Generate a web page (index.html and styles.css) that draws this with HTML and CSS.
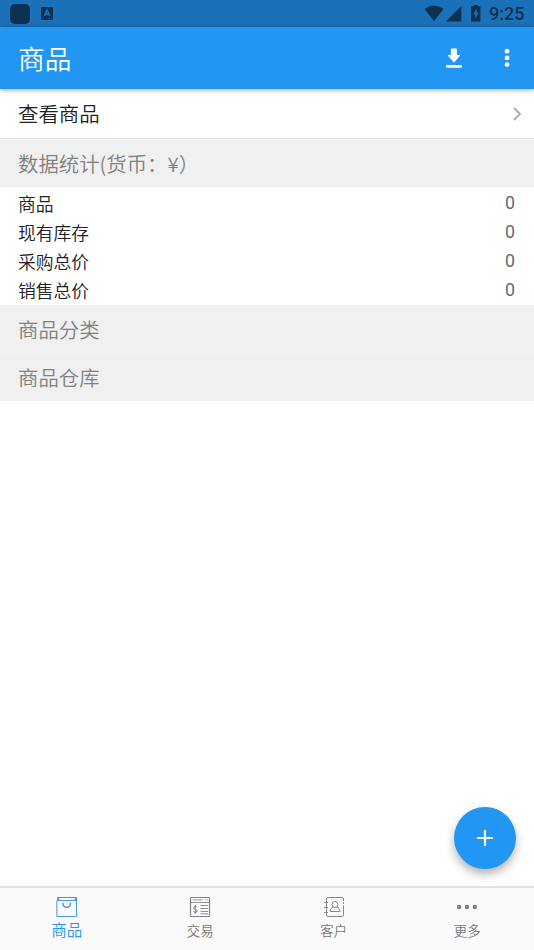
FILE: index.html
```html
<!DOCTYPE html>
<html lang="zh-CN">
<head>
<meta charset="utf-8">
<title>商品</title>
<link rel="stylesheet" href="styles.css">
</head>
<body>
<div class="app">
  <div class="status">
    <span class="square"></span>
    <svg class="badge" width="12" height="13" viewBox="0 0 12 13"><rect width="12" height="13" rx="1" fill="#0d3251"/><path d="M3.4 9 6 3.2 8.6 9M4.4 7.3h3.2" fill="none" stroke="#1b71b8" stroke-width="1.6"/><path d="M6.5 11.5h4" stroke="#1b71b8" stroke-width=".6" stroke-dasharray="1 .5"/></svg>
    <svg class="signals" width="58" height="18" viewBox="0 0 58 18" fill="#0d3251"><path d="M.5 4.1Q10 -2.9 19.5 4.1L10 16.2Z"/><path d="M37.3 1v15.5H21.8Z"/><path fill-rule="evenodd" d="M47 1.3h2.7V0h4v1.3h2.7v15.2H47ZM52.7 3.6 49.2 9.5h2v4.6l3.6-6.3h-2.1Z"/></svg>
    <span class="clock">9:25</span>
  </div>
  <header class="bar">
    <h1>商品</h1>
    <svg class="download" width="16" height="20" viewBox="0 0 16 20" fill="#fff"><path d="M4.9 1Q4.9 .5 5.4 .5h5q.5 0 .5.5v6h2.7q.9 0 .3.7L8.5 14q-.6.5-1.2 0L2 7.7q-.6-.7.3-.7h2.6Z"/><rect x="0" y="17" width="16" height="2.7" rx="1"/></svg>
    <svg class="dots" width="6" height="20" viewBox="0 0 6 20" fill="#fff"><circle cx="3" cy="3.2" r="2.4"/><circle cx="3" cy="9.9" r="2.4"/><circle cx="3" cy="16.6" r="2.4"/></svg>
  </header>
  <main>
    <div class="link"><span>查看商品</span><svg width="9" height="14" viewBox="0 0 9 14"><path d="m1 1 6 6-6 6" fill="none" stroke="#a5abb1" stroke-width="1.8"/></svg></div>
    <h2 class="section">数据统计(货币：¥）</h2>
    <dl class="stats">
      <div><dt>商品</dt><dd>0</dd></div>
      <div><dt>现有库存</dt><dd>0</dd></div>
      <div><dt>采购总价</dt><dd>0</dd></div>
      <div><dt>销售总价</dt><dd>0</dd></div>
    </dl>
    <h2 class="section ruled">商品分类</h2>
    <h2 class="section">商品仓库</h2>
  </main>
  <button class="fab" aria-label="添加"><svg width="16" height="16" viewBox="0 0 16 16"><path d="M8 0v16M0 8h16" stroke="#fff" stroke-width="2.2"/></svg></button>
  <nav class="tabs">
    <div class="tab active">
      <svg width="22" height="22" viewBox="0 0 22 22" fill="none" stroke="#4b96e2"><path d="M.9 4.5V20.5H20.5V1.5H1.5v3h19"/><path d="M1.5 1.5l1.8 3M20.5 1.5l-1.8 3" stroke-width="1.4"/><path d="M7 6.8v.8c0 5 7.5 5 7.5 0v-.8" stroke-width="1.4"/></svg>
      <span>商品</span>
    </div>
    <div class="tab">
      <svg width="22" height="22" viewBox="0 0 22 22" fill="none" stroke="#81858a"><rect x="1.5" y="1.5" width="19" height="19" rx=".8" stroke-width="1.2"/><path d="M2 6.5h18" stroke-width=".9"/><path d="M3.5 3.8h10M16 3.8h1M18 3.8h1" stroke-width="1.2" opacity=".65"/><path d="M11.5 9.5H19M11.5 12.5H19M11.5 15.5H19M11.5 17.8H19" stroke-width=".9"/><path d="M8 11.3c-.5-1.4-3.4-1.2-3.4.5 0 2 3.6 1.2 3.6 3.1 0 1.9-3.2 2-3.8.3M6.3 8.8v9.2"/></svg>
      <span>交易</span>
    </div>
    <div class="tab">
      <svg width="22" height="22" viewBox="0 0 22 22" fill="none" stroke="#85898e"><path d="M20.5 5V3q0-1.5-1.5-1.5H5Q3.5 1.5 3.5 3v16q0 1.5 1.5 1.5h14q1.5 0 1.5-1.5V9.5M20.5 6v2"/><path d="M1 6.5h4M1 11.5h4M1 16.5h4"/><circle cx="12" cy="8.5" r="3"/><path d="M10.3 11c-2 .5-3.1 2-3.1 4.5h9.8c0-2.5-1.2-4-3.2-4.5"/></svg>
      <span>客户</span>
    </div>
    <div class="tab">
      <svg width="22" height="22" viewBox="0 0 22 22" fill="#7b8087"><circle cx="3.1" cy="11" r="2.2"/><circle cx="11" cy="11" r="2.2"/><circle cx="18.8" cy="11" r="2.2"/></svg>
      <span>更多</span>
    </div>
  </nav>
</div>
</body>
</html>
```
FILE: styles.css
```css
* { box-sizing: border-box; }
body { margin: 0; background: #fff; font-family: Roboto, "Noto Sans CJK SC", sans-serif; font-weight: 350; }
h1, h2, dl, dd { margin: 0; font-weight: 350; }
svg { display: block; flex: none; }
.app { position: relative; display: flex; flex-direction: column; height: 950px; overflow: hidden; }
.status { display: flex; flex: none; align-items: center; height: 27px; padding: 0 9px 0 10px; background: #1b71b8; }
.square { width: 20px; height: 20px; border-radius: 5px; background: #0d3251; }
.badge { margin-left: 11px; }
.signals { margin-left: auto; margin-right: -1px; }
.clock { width: 36px; margin-left: 8px; color: #0d3251; font-size: 18px; font-weight: 500; line-height: 27px; white-space: nowrap; }
.bar { position: relative; z-index: 1; display: flex; flex: none; align-items: center; height: 62px; padding: 0 24px 0 18px; background: #2196f3; box-shadow: 0 1px 5px rgba(0, 0, 0, .35); }
.bar h1 { margin-right: auto; padding-top: 4px; color: #fff; font-size: 26.7px; line-height: 62px; }
.download { margin-right: 42px; }
main { flex: 1; }
.link { display: flex; align-items: center; justify-content: space-between; height: 50px; padding: 0 12px 0 18px; border-bottom: 1px solid #e2e2e2; color: #212121; font-size: 20.4px; }
.link span { padding-top: 3px; line-height: 28px; }
.section { height: 48px; padding-left: 18px; background: #f0f0f0; color: #808080; font-family: "Noto Sans CJK SC", sans-serif; font-size: 20.4px; line-height: 48px; white-space: nowrap; }
.section.ruled { border-bottom: 1px solid #f3f3f3; }
.stats { height: 118px; padding: 2px 19px 0 18px; }
.stats div { display: flex; justify-content: space-between; height: 28.9px; color: #212121; font-size: 17.8px; line-height: 31px; }
.stats dd { color: #66696d; font-weight: 400; line-height: 27px; }
.fab { position: absolute; right: 18px; bottom: 81.5px; display: flex; align-items: center; justify-content: center; width: 62px; height: 62px; padding: 1px 0 0; border: 0; border-radius: 50%; background: #2196f3; box-shadow: 0 5px 10px rgba(0, 0, 0, .3); }
.tabs { display: grid; flex: none; grid-template-columns: repeat(4, 1fr); height: 64px; border-top: 2px solid #e1e1e1; background: #fafafa; }
.tab { display: flex; flex-direction: column; align-items: center; padding-top: 8px; color: #777; font-size: 13.4px; }
.tab span { line-height: 22px; margin-top: 3px; }
.tab.active { color: #2196f3; font-size: 15.5px; }
.tab.active span { margin-top: 2px; }
```
